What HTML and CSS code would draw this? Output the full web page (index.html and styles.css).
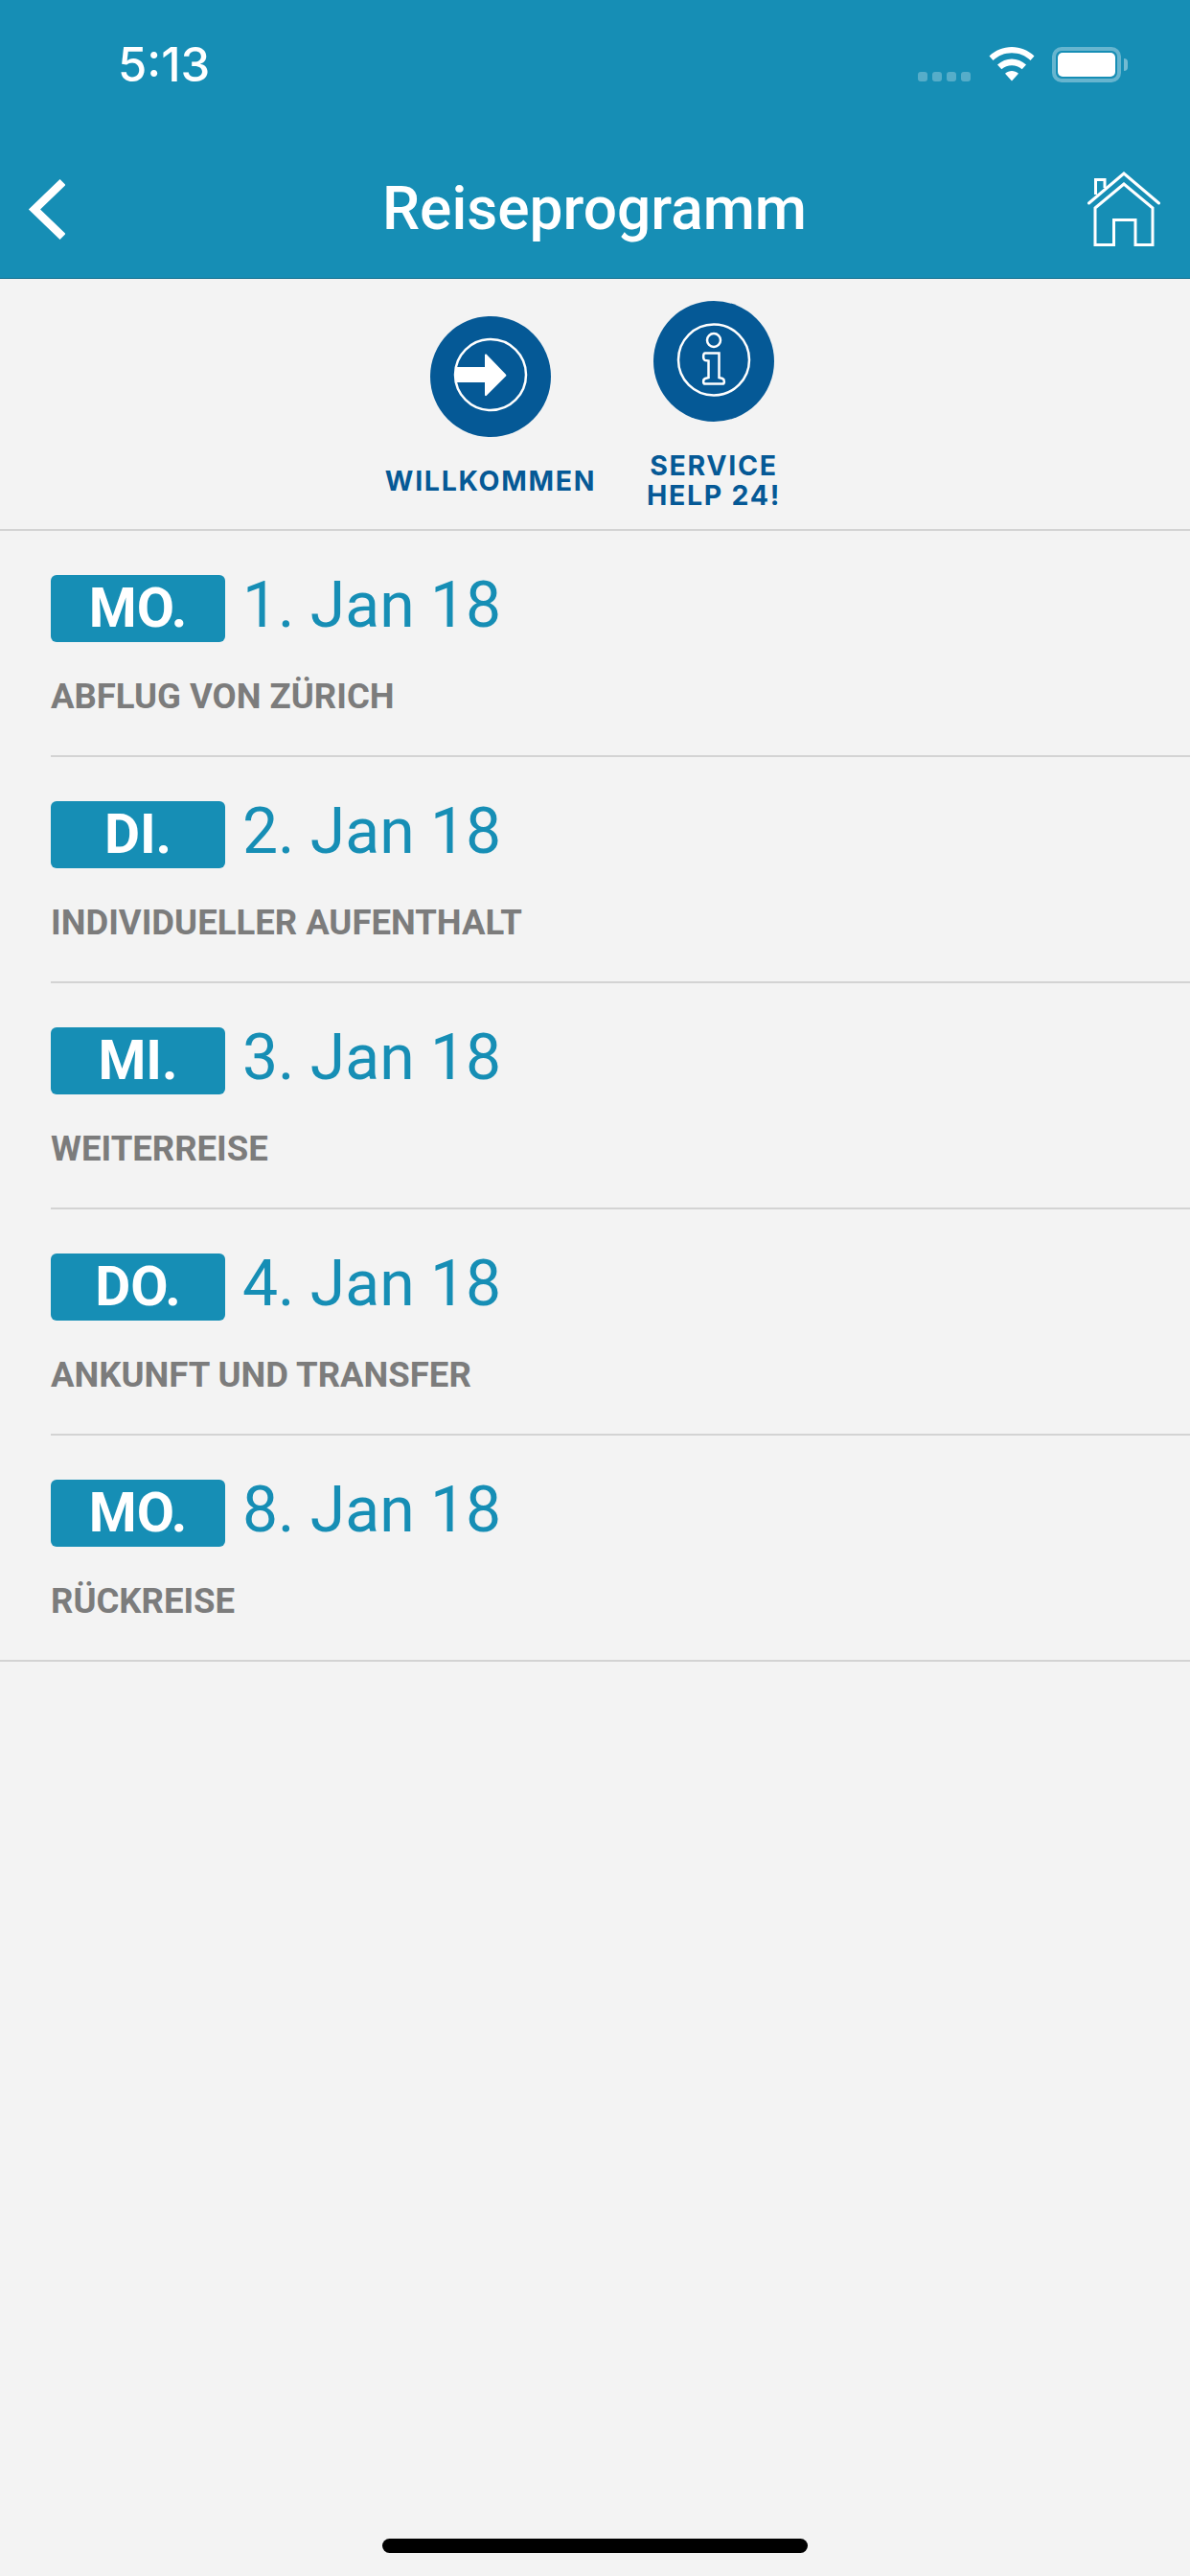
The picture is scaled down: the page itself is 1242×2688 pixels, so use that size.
FILE: index.html
```html
<!DOCTYPE html>
<html lang="de">
<head>
<meta charset="utf-8">
<title>Reiseprogramm</title>
<link rel="stylesheet" href="styles.css">
</head>
<body>
<div class="screen">
  <header class="header">
    <div class="status">
      <span class="time">5:13</span>
      <div class="status-icons">
        <div class="signal"><i></i><i></i><i></i><i></i></div>
        <svg class="wifi" width="48" height="36" viewBox="0 0 48 36"><path fill="#fff" d="M24 0C15 0 7 3.400 0.500 9.500L4.500 14C10 9 16.500 6.300 24 6.300S38 9 43.500 14L47.500 9.500C41 3.400 33 0 24 0Z"/><path fill="#fff" d="M24 12.500C18.500 12.500 13.500 14.600 9 18.500L13.300 23.300C16.500 20.600 20 19.200 24 19.200S31.500 20.600 34.700 23.300L39 18.500C34.500 14.600 29.500 12.500 24 12.500Z"/><path fill="#fff" d="M24 25C21.500 25 19.200 26 17 27.800L24 35.500L31 27.800C28.800 26 26.500 25 24 25Z"/></svg>
        <div class="battery"><div class="battery-fill"></div><div class="battery-cap"></div></div>
      </div>
    </div>
    <nav class="navbar">
      <svg class="back" width="40" height="66" viewBox="0 0 40 66"><path d="M37.500 5L8 33.500L37.500 62" fill="none" stroke="#fff" stroke-width="8.500"/></svg>
      <h1 class="title">Reiseprogramm</h1>
      <svg class="home" width="78" height="78" viewBox="0 0 78 78"><path d="M1.500 33L38 2L74.500 33" fill="none" stroke="#fff" stroke-width="3" stroke-linecap="round"/><path d="M8.500 24V8.500H18V17" fill="none" stroke="#fff" stroke-width="3"/><path d="M8 38L38 13L68 38V76.500H50V50.500H27.500V76.500H8Z" fill="none" stroke="#fff" stroke-width="3"/></svg>
    </nav>
  </header>

  <section class="shortcuts">
    <a class="shortcut shortcut-low">
      <svg class="shortcut-icon" width="126" height="126" viewBox="0 0 126 126"><circle cx="63" cy="63" r="63" fill="#055996"/><circle cx="63" cy="61" r="37" fill="none" stroke="#fff" stroke-width="2.500"/><path d="M26 53H57V40.500C57 39.500 58 39 58.800 39.800L79 60.800C79.500 61.300 79.500 62 79 62.500L58.800 82.800C58 83.500 57 83 57 82V69H26Z" fill="#fff"/></svg>
      <span class="shortcut-label">WILLKOMMEN</span>
    </a>
    <a class="shortcut">
      <svg class="shortcut-icon" width="126" height="126" viewBox="0 0 126 126"><circle cx="63" cy="63" r="63" fill="#055996"/><circle cx="63" cy="61.500" r="37" fill="none" stroke="#fff" stroke-width="2.500"/><circle cx="63" cy="41" r="7" fill="none" stroke="#fff" stroke-width="2.500"/><path d="M54 54.500H68.500V80L72 81C74.500 82 74.500 86.500 72 86.500H54C51.500 86.500 51.500 82 54 81L57.500 80V62.500L54 62C51.500 61.500 51.500 54.500 54 54.500Z" fill="none" stroke="#fff" stroke-width="2.500"/></svg>
      <span class="shortcut-label">SERVICE<br>HELP 24!</span>
    </a>
  </section>

  <ul class="days">
    <li class="day">
      <div class="day-head"><span class="badge">MO.</span><span class="date">1. Jan 18</span></div>
      <p class="desc">ABFLUG VON ZÜRICH</p>
    </li>
    <li class="day">
      <div class="day-head"><span class="badge">DI.</span><span class="date">2. Jan 18</span></div>
      <p class="desc">INDIVIDUELLER AUFENTHALT</p>
    </li>
    <li class="day">
      <div class="day-head"><span class="badge">MI.</span><span class="date">3. Jan 18</span></div>
      <p class="desc">WEITERREISE</p>
    </li>
    <li class="day">
      <div class="day-head"><span class="badge">DO.</span><span class="date">4. Jan 18</span></div>
      <p class="desc">ANKUNFT UND TRANSFER</p>
    </li>
    <li class="day">
      <div class="day-head"><span class="badge">MO.</span><span class="date">8. Jan 18</span></div>
      <p class="desc">RÜCKREISE</p>
    </li>
  </ul>
  <div class="home-indicator"></div>
</div>
</body>
</html>
```
FILE: styles.css
```css
* { box-sizing: border-box; }
html, body { margin: 0; padding: 0; }
body { background: #f3f3f3; font-family: Roboto, sans-serif; }
.screen { position: relative; width: 1242px; height: 2688px; overflow: hidden; background: #f3f3f3; }

.header { height: 291px; background: #168eb5; border-bottom: 1px solid #0f6f8f; color: #fff; display: flex; flex-direction: column; }
.status { height: 146px; display: flex; justify-content: space-between; padding: 35px 72px 0 123px; }
.time { font-family: Inter, sans-serif; font-size: 49px; font-weight: 500; line-height: 66px; }
.status-icons { display: flex; align-items: flex-start; padding-top: 14px; }
.signal { display: flex; gap: 5px; margin-top: 26px; margin-right: 19px; }
.signal i { width: 10px; height: 10px; border-radius: 3px; background: rgba(255,255,255,.28); }
.wifi { margin-right: 18px; }
.battery { position: relative; width: 72px; height: 37px; border: 4px solid rgba(255,255,255,.35); border-radius: 10px; padding: 2px; }
.battery-fill { width: 100%; height: 100%; background: #fff; border-radius: 5px; }
.battery-cap { position: absolute; right: -11px; top: 8px; width: 4px; height: 13px; background: rgba(255,255,255,.4); border-radius: 0 4px 4px 0; }

.navbar { flex: 1; display: grid; grid-template-columns: 1fr auto 1fr; align-items: center; padding: 0 29px 0 28px; }
.back { justify-self: start; }
.home { justify-self: end; }
.title { margin: 0; text-align: center; font-size: 62.2px; font-weight: 500; line-height: 70px; }

.shortcuts { height: 263px; display: flex; justify-content: flex-start; gap: 9px; border-bottom: 2px solid #d3d3d3; padding: 23px 0 0 400px; }
.shortcut { width: 224px; display: flex; flex-direction: column; align-items: center; color: #055996; }
.shortcut-low { padding-top: 16px; }
.shortcut-label { font-family: Inter, sans-serif; font-weight: 700; font-size: 28.5px; letter-spacing: 1.7px; line-height: 31px; text-align: center; margin-top: 30px; }

.days { list-style: none; margin: 0; padding: 0; }
.day { height: 236px; margin-left: 53px; padding-top: 46px; border-bottom: 2px solid #d3d3d3; }
.day:last-child { margin-left: 0; padding-left: 53px; }
.day-head { display: flex; align-items: center; height: 70px; }
.badge { width: 182px; height: 70px; background: #168eb5; color: #fff; border-radius: 6px; font-size: 57px; font-weight: 700; text-align: center; line-height: 70px; }
.date { color: #168eb5; font-size: 66px; margin-left: 18px; line-height: 70px; padding-bottom: 6px; }
.desc { margin: 36px 0 0; color: #7c7c7c; font-size: 36.5px; font-weight: 700; line-height: 42px; }

.home-indicator { position: absolute; left: 399px; top: 2649px; width: 444px; height: 15px; border-radius: 8px; background: #000; }
```
